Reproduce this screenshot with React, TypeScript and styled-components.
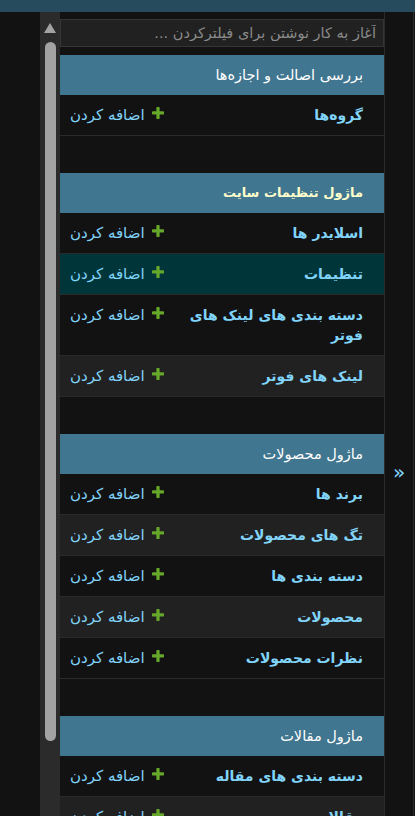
import React from "react";
import styled, {createGlobalStyle} from "styled-components";

const BODY_BG = "#121212";
const DARKENED_BG = "#212121";
const HAIRLINE = "#2a2a2a";
const BORDER = "#353535";
const PRIMARY = "#417690";
const HEADER_BG = "#264b5d";
const SELECTED_ROW = "#00363a";
const LINK = "#81d4fa";

const GlobalStyle = createGlobalStyle`
    html, body {
        margin: 0;
        padding: 0;
        background: ${BODY_BG};
        overflow: hidden;
        font-family: "DejaVu Sans", "Noto Sans", sans-serif;
    }
`;

const Page = styled.div`
    width: 415px;
    height: 816px;
    display: flex;
    flex-direction: column;
    overflow: hidden;
`;

const Header = styled.div`
    height: 12px;
    flex: 0 0 12px;
    background: ${HEADER_BG};
`;

const Main = styled.div`
    flex: 1;
    display: flex;
    min-height: 0;
`;

const Gutter = styled.div`
    flex: 0 0 40px;
`;

const ScrollTrack = styled.div`
    flex: 0 0 20px;
    background: #2b2b2b;
    display: flex;
    flex-direction: column;
    align-items: center;
`;

const ArrowUp = styled.div`
    margin-top: 11px;
    width: 0;
    height: 0;
    border-left: 6px solid transparent;
    border-right: 6px solid transparent;
    border-bottom: 10px solid #a3a3a3;
`;

const Thumb = styled.div`
    margin-top: 9px;
    width: 11px;
    height: 699px;
    border-radius: 6px;
    background: #a3a3a3;
`;

const Sidebar = styled.nav`
    flex: 0 0 324px;
    border-right: 1px solid ${HAIRLINE};
    direction: rtl;
    overflow: hidden;
`;

const Filter = styled.input`
    display: block;
    box-sizing: border-box;
    width: 100%;
    height: 28px;
    margin: 7px 0 8px;
    padding: 2px 7px;
    background: ${DARKENED_BG};
    border: 1px solid ${BORDER};
    color: #eee;
    font-family: inherit;
    font-size: 14.5px;
    outline: none;

    &::placeholder {
        color: #8a8a8a;
    }
`;

const Module = styled.div`
    margin-bottom: 37px;
`;

const Caption = styled.div<{ $current?: boolean }>`
    background: ${PRIMARY};
    padding: 10px 21px 10px 8px;
    line-height: 20px;
    font-size: ${p => (p.$current ? "13px" : "14.5px")};
    color: ${p => (p.$current ? "#ffffcc" : "#fff")};
    font-weight: ${p => (p.$current ? "bold" : "normal")};
`;

const Row = styled.div<{ $bg: string }>`
    display: flex;
    align-items: flex-start;
    background: ${p => p.$bg};
    border-bottom: 1px solid ${HAIRLINE};
`;

const Name = styled.a`
    flex: 1;
    padding: 10px 21px 10px 8px;
    line-height: 20px;
    font-size: 14px;
    font-weight: bold;
    color: ${LINK};
    text-decoration: none;
    overflow-wrap: anywhere;
`;

const AddCell = styled.div`
    display: flex;
    padding: 10px 8px 10px 10px;
    white-space: nowrap;
`;

const AddLink = styled.a`
    display: flex;
    align-items: flex-start;
    gap: 7px;
    height: 20px;
    line-height: 20px;
    font-size: 15px;
    color: ${LINK};
    text-decoration: none;

    svg {
        margin-top: 2px;
        flex: 0 0 auto;
    }
`;

const Toggle = styled.div`
    flex: 0 0 28px;
    border-right: 1px solid ${HAIRLINE};
    display: flex;
    justify-content: center;
    padding-top: 448px;
    color: ${LINK};
    font-size: 20px;
    line-height: 24px;
`;

const PlusIcon = () => (
    <svg width="12" height="12" viewBox="192 192 1408 1408">
        <path
            fill="#66a82a"
            d="M1600 796v192q0 40-28 68t-68 28h-416v416q0 40-28 68t-68 28h-192q-40 0-68-28t-28-68v-416h-416q-40 0-68-28t-28-68v-192q0-40 28-68t68-28h416v-416q0-40 28-68t68-28h192q40 0 68 28t28 68v416h416q40 0 68 28t28 68z"
        />
    </svg>
);

type App = { name: string; current?: boolean; models: { name: string; current?: boolean }[] };

const apps: App[] = [
    {name: "بررسی اصالت و اجازه‌ها", models: [{name: "گروه‌ها"}]},
    {
        name: "ماژول تنظیمات سایت",
        current: true,
        models: [
            {name: "اسلایدر ها"},
            {name: "تنظیمات", current: true},
            {name: "دسته بندی های لینک های فوتر"},
            {name: "لینک های فوتر"},
        ],
    },
    {
        name: "ماژول محصولات",
        models: [
            {name: "برند ها"},
            {name: "تگ های محصولات"},
            {name: "دسته بندی ها"},
            {name: "محصولات"},
            {name: "نظرات محصولات"},
        ],
    },
    {
        name: "ماژول مقالات",
        models: [{name: "دسته بندی های مقاله"}, {name: "مقالات"}],
    },
];

export default function AppPage() {
    return (
        <Page>
            <GlobalStyle/>
            <Header/>
            <Main>
                <Gutter/>
                <ScrollTrack>
                    <ArrowUp/>
                    <Thumb/>
                </ScrollTrack>
                <Sidebar>
                    <Filter placeholder="آغاز به کار نوشتن برای فیلترکردن ..."/>
                    {apps.map(app => (
                        <Module key={app.name}>
                            <Caption $current={app.current}>{app.name}</Caption>
                            {app.models.map((m, i) => (
                                <Row
                                    key={m.name}
                                    $bg={m.current ? SELECTED_ROW : i % 2 ? DARKENED_BG : BODY_BG}
                                >
                                    <Name href="#">{m.name}</Name>
                                    <AddCell>
                                        <AddLink href="#">
                                            <PlusIcon/>
                                            <span>اضافه کردن</span>
                                        </AddLink>
                                    </AddCell>
                                </Row>
                            ))}
                        </Module>
                    ))}
                </Sidebar>
                <Toggle>»</Toggle>
            </Main>
        </Page>
    );
}
